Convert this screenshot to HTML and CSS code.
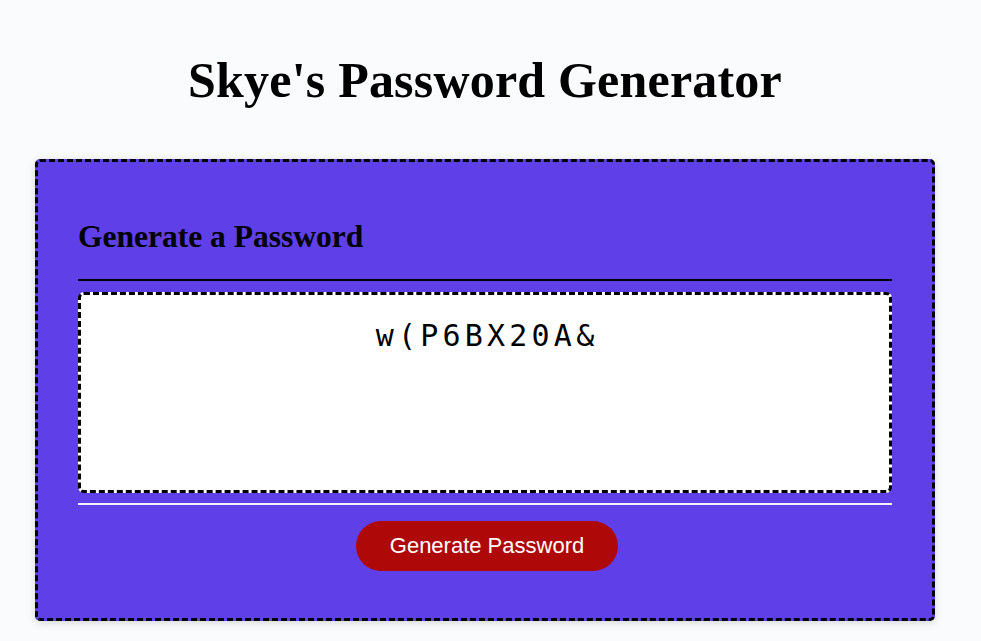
FILE: index.html
```
<!DOCTYPE html>
<html lang="en">
<head>
<meta charset="UTF-8">
<title>Skye's Password Generator</title>
<link rel="stylesheet" href="styles.css">
</head>
<body>
  <div class="wrapper">
    <header>
      <h1>Skye's Password Generator</h1>
    </header>
    <div class="card">
      <div class="card-header">
        <h2>Generate a Password</h2>
      </div>
      <div class="card-body">
        <textarea readonly id="password" aria-label="Generated Password">w(P6BX20A&amp;</textarea>
      </div>
      <div class="card-footer">
        <button id="generate" class="btn">Generate Password</button>
      </div>
    </div>
  </div>
</body>
</html>
```
FILE: styles.css
```
*, *::before, *::after {
  box-sizing: border-box;
}

html, body {
  margin: 0;
  padding: 0;
  height: 100%;
}

body {
  background-color: #f9fbfd;
  font-family: "Liberation Serif", serif;
  color: #000;
}

.wrapper {
  padding: 0 46px 0 35px;
}

header {
  text-align: center;
  padding-top: 52px;
  padding-bottom: 51px;
}

h1 {
  margin: 0;
  font-size: 50px;
  line-height: 56px;
  font-weight: 700;
  letter-spacing: 0.2px;
}

.card {
  background-color: #5e3fe8;
  border: 3px dashed #000;
  border-radius: 5px;
  box-shadow: rgba(0, 0, 0, 0.15) 0px 2px 8px 0px;
  width: 900px;
  padding: 30px 40px;
}

.card-header h2 {
  margin: 0;
  padding-top: 27px;
  padding-bottom: 24px;
  font-size: 31.5px;
  line-height: 36px;
  font-weight: 700;
}

.card-header::after {
  content: " ";
  display: block;
  width: 100%;
  height: 2px;
  background: #000;
}

.card-body {
  padding: 11px 0 10px;
}

textarea {
  display: block;
  width: 100%;
  height: 201px;
  background: #fff;
  border: 3px dashed #000;
  border-radius: 6px;
  padding: 25px 15px 15px;
  font-family: "DejaVu Sans Mono", monospace;
  font-size: 30px;
  letter-spacing: 4.2px;
  text-indent: 4.2px;
  line-height: 32px;
  text-align: center;
  color: #000;
  resize: none;
  overflow: hidden;
  outline: none;
}

.card-footer {
  text-align: center;
}

.card-footer::before {
  content: " ";
  display: block;
  width: 100%;
  height: 2px;
  background: #f1f1f4;
}

.btn {
  display: inline-block;
  vertical-align: top;
  border: none;
  background-color: hsl(360, 91%, 36%);
  border-radius: 25px;
  color: #fff;
  font-family: "Liberation Sans", Arial, sans-serif;
  font-size: 22px;
  line-height: 22px;
  padding: 14px 34px;
  margin: 16px 0 17px 4px;
  cursor: pointer;
}
```
